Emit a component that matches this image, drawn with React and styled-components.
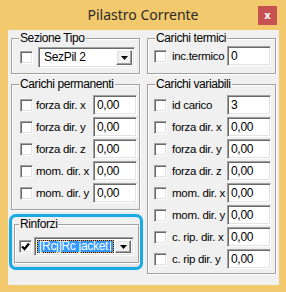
import styled, { createGlobalStyle } from 'styled-components';

const GlobalStyle = createGlobalStyle`
  html, body {
    margin: 0;
    padding: 0;
    background: #f2c96c;
  }
  * {
    box-sizing: border-box;
  }
`;

const Window = styled.div`
  width: 286px;
  height: 292px;
  background: #f2c96c;
  display: flex;
  flex-direction: column;
  font-family: "Liberation Sans", Arial, sans-serif;
  color: #000;
`;

const TitleBar = styled.div`
  height: 30px;
  display: grid;
  grid-template-columns: 1fr auto 1fr;
  padding: 0 9px;
`;

const Title = styled.div`
  grid-column: 2;
  align-self: center;
  font-family: "Noto Sans", "Open Sans", sans-serif;
  font-size: 14px;
  color: #2b2b2b;
  padding-bottom: 1px;
`;

const CloseButton = styled.div`
  grid-column: 3;
  justify-self: end;
  margin-top: 6px;
  width: 19px;
  height: 19px;
  background: #c75050;
  color: #fff;
  font-family: "DejaVu Sans", sans-serif;
  font-weight: bold;
  font-size: 10px;
  display: flex;
  align-items: center;
  justify-content: center;
`;

const Client = styled.div`
  flex: 1;
  margin: 0 7px 7px 8px;
  background: #f0f0f0;
  display: flex;
  gap: 7px;
  padding: 8px 3px 0 3px;
`;

const Column = styled.div`
  width: 129px;
  display: flex;
  flex-direction: column;
`;

const Group = styled.div`
  position: relative;
  height: ${p => p.$h}px;
  margin-top: ${p => p.$mt || 0}px;
  border: 1px solid #a0a0a0;
  box-shadow: 1px 1px 0 #fff, inset 1px 1px 0 #fff;
  padding: ${p => p.$pad};
`;

const Legend = styled.span`
  position: absolute;
  top: -8px;
  left: ${p => p.$left || 7}px;
  padding: 0 1px;
  background: #f0f0f0;
  font-size: 12px;
  letter-spacing: -0.4px;
  line-height: 14px;
`;

const Row = styled.div`
  display: flex;
  align-items: center;
  height: ${p => p.$h || 20}px;
  margin-bottom: 2px;
`;

const Check = styled.div`
  width: 13px;
  height: 13px;
  flex: none;
  background: #fff;
  border: 1px solid;
  border-color: #a0a0a0 #fff #fff #a0a0a0;
  box-shadow: inset 1px 1px 0 #696969, inset -1px -1px 0 #e3e3e3;
  margin-right: ${p => p.$gap}px;
  display: flex;
  align-items: center;
  justify-content: center;
`;

const Label = styled.span`
  flex: 1;
  font-size: 11.5px;
  letter-spacing: -0.3px;
  white-space: nowrap;
`;

const Field = styled.div`
  width: 44px;
  height: 20px;
  flex: none;
  background: #fff;
  border: 1px solid;
  border-color: #a0a0a0 #fff #fff #a0a0a0;
  box-shadow: inset 1px 1px 0 #696969, inset -1px -1px 0 #e3e3e3;
  font-size: 12px;
  letter-spacing: -0.3px;
  padding: 2px 0 0 3px;
  line-height: 14px;
`;

const Combo = styled.div`
  width: ${p => p.$w}px;
  height: ${p => p.$h}px;
  flex: none;
  background: #fff;
  border: 1px solid;
  border-color: #a0a0a0 #fff #fff #a0a0a0;
  box-shadow: inset 1px 1px 0 #696969, inset -1px -1px 0 #e3e3e3;
  display: flex;
  padding: 2px;
`;

const ComboText = styled.div`
  flex: 1;
  white-space: nowrap;
  font-size: 12px;
  letter-spacing: -0.3px;
  line-height: 15px;
  padding-left: 3px;
`;

const Selected = styled.div`
  flex: 1;
  display: flex;
  align-items: center;
  white-space: nowrap;
  font-size: 12px;
  letter-spacing: -0.3px;
  line-height: 13px;
  color: #fff;
  padding-left: 1px;
  margin-right: 1px;
  border: 1px dotted #111;
  background: linear-gradient(#3399ff, #3399ff) padding-box, #f0a030 border-box;
`;

const Caret = styled.span`
  width: 1px;
  height: 9px;
  background: #fff;
  margin-left: auto;
  margin-right: 2px;
`;

const DropButton = styled.div`
  width: 16px;
  flex: none;
  background: #f0f0f0;
  border: 1px solid;
  border-color: #fff #696969 #696969 #fff;
  box-shadow: inset -1px -1px 0 #a0a0a0, inset 1px 1px 0 #e3e3e3;
  display: flex;
  align-items: center;
  justify-content: center;
`;

const Highlight = styled.div`
  margin: 4px -3px 0 -2px;
  height: 56px;
  border: 3px solid #1ba9e3;
  border-radius: 7px;
  box-shadow: 0 0 1px #6fd0f5, inset 0 0 1px #6fd0f5;
  padding: 7px 1px 4px 2px;
  background: linear-gradient(#f0f0f0, #f0f0f0 70%, #e4e4e4);
`;

const Arrow = () => (
  <svg width="7" height="4" viewBox="0 0 7 4">
    <polygon points="0,0 7,0 3.5,4" fill="#000" />
  </svg>
);

const Tick = () => (
  <svg width="9" height="9" viewBox="0 0 9 9">
    <path d="M1 4.5 L3.5 7 L8 1.5" stroke="#000" strokeWidth="2.2" fill="none" />
  </svg>
);

const permanenti = ['forza dir. x', 'forza dir. y', 'forza dir. z', 'mom. dir. x', 'mom. dir. y'];
const variabili = [
  ['id carico', '3'],
  ['forza dir. x', '0,00'],
  ['forza dir. y', '0,00'],
  ['forza dir. z', '0,00'],
  ['mom. dir. x', '0,00'],
  ['mom. dir. y', '0,00'],
  ['c. rip. dir. x', '0,00'],
  ['c. rip dir. y', '0,00'],
];

export default function App() {
  return (
    <Window>
      <GlobalStyle />
      <TitleBar>
        <Title>Pilastro Corrente</Title>
        <CloseButton>x</CloseButton>
      </TitleBar>
      <Client>
        <Column>
          <Group $h={36} $pad="8px 4px 0 8px">
            <Legend>Sezione Tipo</Legend>
            <Row $h={21}>
              <Check $gap={5} />
              <Combo $w={97} $h={21}>
                <ComboText>SezPil 2</ComboText>
                <DropButton><Arrow /></DropButton>
              </Combo>
            </Row>
          </Group>
          <Group $h={126} $mt={10} $pad="10px 2px 0 8px">
            <Legend>Carichi permanenti</Legend>
            {permanenti.map(l => (
              <Row key={l}>
                <Check $gap={3} />
                <Label>{l}</Label>
                <Field>0,00</Field>
              </Row>
            ))}
          </Group>
          <Highlight>
            <Group $h={39} $pad="12px 3px 0 4px">
              <Legend $left={4}>Rinforzi</Legend>
              <Row $h={19}>
                <Check $gap={2}><Tick /></Check>
                <Combo $w={100} $h={19}>
                  <Selected>[Rcj]Rc jacket<Caret /></Selected>
                  <DropButton><Arrow /></DropButton>
                </Combo>
              </Row>
            </Group>
          </Highlight>
        </Column>
        <Column>
          <Group $h={36} $pad="7px 4px 0 6px">
            <Legend>Carichi termici</Legend>
            <Row>
              <Check $gap={5} />
              <Label>inc.termico</Label>
              <Field>0</Field>
            </Row>
          </Group>
          <Group $h={190} $mt={10} $pad="10px 4px 0 6px">
            <Legend>Carichi variabili</Legend>
            {variabili.map(([l, v]) => (
              <Row key={l}>
                <Check $gap={5} />
                <Label>{l}</Label>
                <Field>{v}</Field>
              </Row>
            ))}
          </Group>
        </Column>
      </Client>
    </Window>
  );
}
